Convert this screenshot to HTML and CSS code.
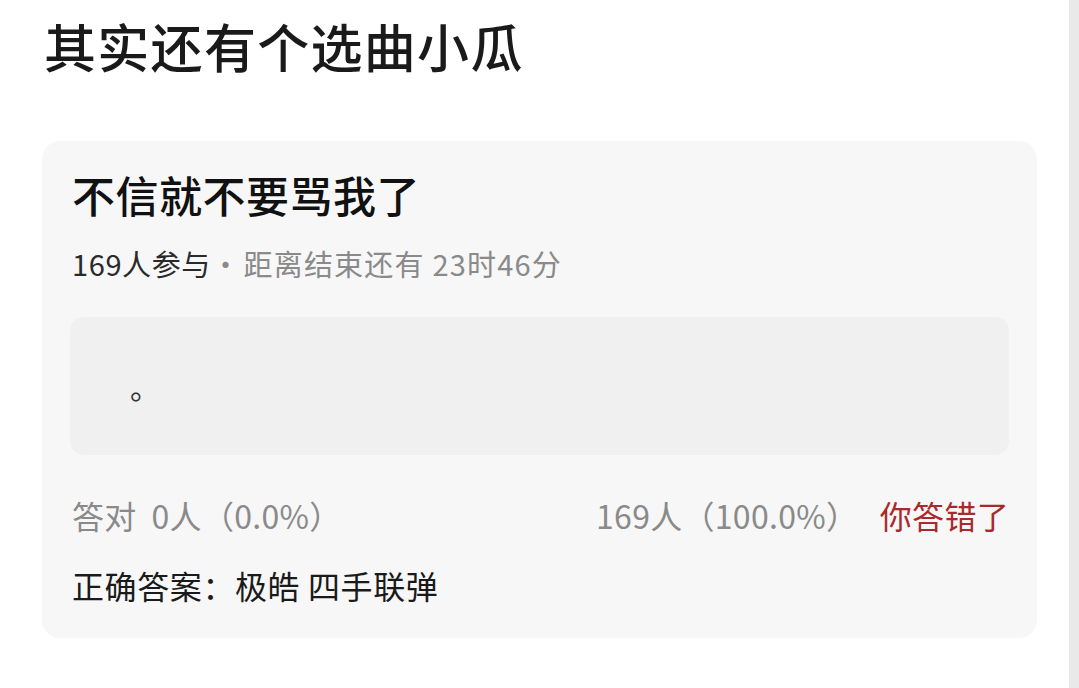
FILE: index.html
```html
<html lang="zh">
<head>
  <meta charset="utf-8">
  <link rel="stylesheet" href="styles.css">
</head>
<body>
  <div class="pagina">
    <div class="contenido">
      <h1 class="titulo">其实还有个选曲小瓜</h1>

      <div class="tarjeta">
        <div class="pregunta">不信就不要骂我了</div>
        <div class="info"><span class="oscuro">169人参与</span><span class="punto">·</span><span class="tiempo">距离结束还有 23时46分</span></div>

        <div class="opcion">
          <span class="opcion-texto">。</span>
        </div>

        <div class="resultado">
          <span class="gris">答对&nbsp;&nbsp;0人（0.0%）</span>
          <span class="derecha">
            <span class="gris">169人（100.0%）</span>
            <span class="rojo">你答错了</span>
          </span>
        </div>

        <div class="respuesta">正确答案：极皓 四手联弹</div>
      </div>
    </div>
    <div class="borde"></div>
  </div>
</body>
</html>
```

FILE: styles.css
```css
body {
    margin: 0;
    background-color: #ffffff;
    font-family: "Noto Sans CJK SC", "Noto Sans", sans-serif;
    color: #1a1a1a;
}

.pagina {
    display: flex;
    height: 688px;
    overflow: hidden;
}

.contenido {
    flex: 1;
    padding: 0 32px 0 42px;
}

.borde {
    width: 10px;
    background-color: #e9e9e9;
}

.titulo {
    margin: 0;
    padding-top: 13px;
    padding-left: 2px;
    font-size: 52px;
    font-weight: 500;
    line-height: 66px;
    letter-spacing: 1.3px;
}

.tarjeta {
    margin-top: 62px;
    background-color: #f7f7f7;
    border-radius: 18px;
    padding: 23px 28px 26px 30px;
    height: 497px;
    box-sizing: border-box;
}

.pregunta {
    font-size: 43px;
    font-weight: 500;
    line-height: 60px;
    letter-spacing: 0.5px;
    color: #111111;
}

.info {
    margin-top: 20px;
    font-size: 29px;
    line-height: 38px;
    letter-spacing: 0.6px;
    color: #8a8a8a;
}

.info .oscuro {
    color: #2a2a2a;
}

.info .punto {
    margin: 0 3px 0 0;
}

.info .tiempo {
    letter-spacing: 1.2px;
}

.opcion {
    margin-top: 35px;
    margin-left: -2px;
    height: 138px;
    background-color: #f0f0f0;
    border-radius: 14px;
    display: flex;
    align-items: center;
    padding-left: 60px;
}

.opcion-texto {
    font-size: 30px;
    color: #333333;
}

.resultado {
    margin-top: 37px;
    display: flex;
    justify-content: space-between;
    font-size: 32px;
    line-height: 46px;
    letter-spacing: 0.3px;
}

.gris {
    color: #8a8a8a;
}

.rojo {
    color: #a92a2c;
    margin-left: 14px;
}

.respuesta {
    margin-top: 24px;
    font-size: 32px;
    line-height: 46px;
    letter-spacing: 0.6px;
    color: #1a1a1a;
}
```
